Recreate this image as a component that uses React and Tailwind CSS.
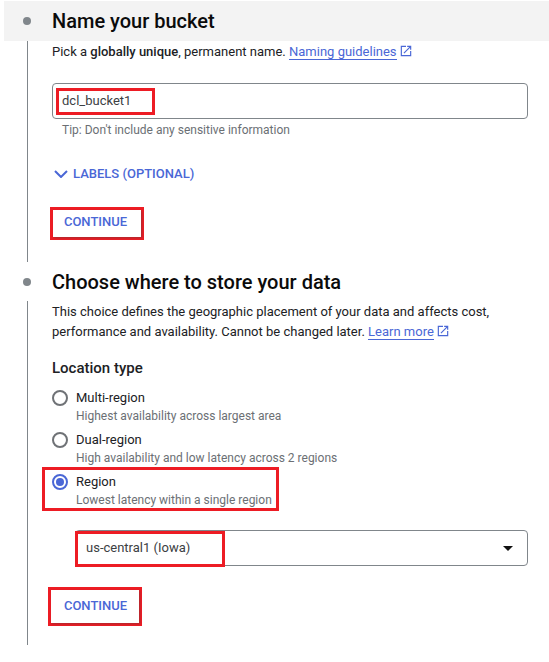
const OpenIcon = () => (
  <svg viewBox="0 0 24 24" className="inline-block w-[14px] h-[14px] ml-[2px] align-[-2px] fill-[#4a67d6]">
    <path d="M19 19H5V5h7V3H3v18h18v-9h-2v7zM14 3v2h3.59l-9.83 9.83 1.41 1.41L19 6.41V10h2V3h-7z" />
  </svg>
);

const ContinueButton = ({ className, buttonClass }) => (
  <div className={`border-[3px] border-[#ed1c24] ${className}`}>
    <button className={`w-full h-full text-[13px] font-medium text-[#4a67d6] bg-white shadow-[1px_1px_2px_rgba(60,64,67,0.4)] ${buttonClass}`}>
      CONTINUE
    </button>
  </div>
);

const Radio = ({ label, hint, checked }) => (
  <div className="flex h-[36px]">
    <div className={`mt-[1px] w-[16px] h-[16px] rounded-full border-2 flex items-center justify-center ${checked ? "border-[#4a67d6]" : "border-[#6f7276]"}`}>
      {checked && <div className="w-[8px] h-[8px] rounded-full bg-[#4a67d6]" />}
    </div>
    <div className="ml-[8px]">
      <div className="text-[13px] leading-[18px] text-[#202124]">{label}</div>
      <div className="text-[12px] leading-[18px] text-[#6b6f74] whitespace-nowrap">{hint}</div>
    </div>
  </div>
);

const StepTitle = ({ title, className }) => (
  <div className={`flex items-center ${className}`}>
    <div className="w-[8px] h-[8px] rounded-full bg-[#80868b]" />
    <h2 className="ml-[21px] text-[20px] font-medium text-[#0b0b0b]">{title}</h2>
  </div>
);

export default function App() {
  return (
    <div className="w-[549px] h-[662px] bg-white pt-[1px] overflow-hidden font-['Roboto',sans-serif] text-[13px] text-[#202124]">
      <StepTitle title="Name your bucket" className="h-[40px] ml-[4px] pl-[19px] bg-[#f3f3f3]" />

      <section className="ml-[27px] w-[501px] h-[221px] border-l border-[#80868b] pl-[24px]">
        <p className="pt-[1px] leading-[20px]">
          Pick a <b className="font-medium">globally unique</b>, permanent name.{" "}
          <a className="text-[#4a67d6] border-b border-[#4a67d6]">Naming guidelines</a>
          <OpenIcon />
        </p>

        <div className="mt-[21px] h-[36px] border border-[#80868b] rounded-[4px] flex items-center pl-[3px]">
          <div className="w-[99px] h-[27px] border-[3px] border-[#ed1c24] flex items-center pl-[3px] text-[#3c4043]">
            dcl_bucket1
          </div>
        </div>
        <div className="mt-[2px] ml-[10px] text-[12px] leading-[18px] text-[#6b6f74]">
          Tip: Don't include any sensitive information
        </div>

        <div className="mt-[25px] h-[20px] flex items-center text-[13px] font-medium text-[#4a67d6]">
          <svg viewBox="0 0 14 8" className="w-[14px] h-[8px] ml-[2px] fill-none stroke-[#4a67d6] stroke-2">
            <path d="M1 1l6 6 6-6" />
          </svg>
          <span className="ml-[5px]">LABELS (OPTIONAL)</span>
        </div>

        <ContinueButton className="mt-[23px] -ml-[2px] w-[94px] h-[33px]" buttonClass="pb-[4px] pr-[3px]" />
      </section>

      <StepTitle title="Choose where to store your data" className="h-[39px] pl-[23px]" />

      <section className="ml-[27px] w-[501px] h-[344px] border-l border-[#80868b] pl-[24px]">
        <p className="pt-[1px] leading-[20px] whitespace-nowrap">
          This choice defines the geographic placement of your data and affects cost,
          <br />
          performance and availability. Cannot be changed later.{" "}
          <a className="text-[#4a67d6] border-b border-[#4a67d6]">Learn more</a>
          <OpenIcon />
        </p>

        <h3 className="mt-[16px] text-[15px] font-medium leading-[20px]">Location type</h3>

        <div className="mt-[11px] flex flex-col gap-[6px]">
          <Radio label="Multi-region" hint="Highest availability across largest area" />
          <Radio label="Dual-region" hint="High availability and low latency across 2 regions" />
        </div>

        <div className="-ml-[10px] w-[237px] h-[44px] border-[3px] border-[#ed1c24] pl-[7px] pt-[3px]">
          <Radio checked label="Region" hint="Lowest latency within a single region" />
        </div>

        <div className="mt-[19px] ml-[23px] w-[453px] h-[36px] border border-[#80868b] rounded-[4px] flex items-center justify-between pr-[14px]">
          <div className="-ml-[1px] self-start w-[150px] h-[36px] border-[3px] border-[#ed1c24] flex items-center pl-[8px] pb-[2px] text-[#3c4043]">
            us-central1 (Iowa)
          </div>
          <svg viewBox="0 0 10 5" className="w-[10px] h-[5px] fill-[#111]">
            <path d="M0 0h10L5 5z" />
          </svg>
        </div>

        <ContinueButton className="mt-[21px] -ml-[4px] w-[94px] h-[39px]" buttonClass="pb-[2px] pl-[1px]" />
      </section>
    </div>
  );
}
